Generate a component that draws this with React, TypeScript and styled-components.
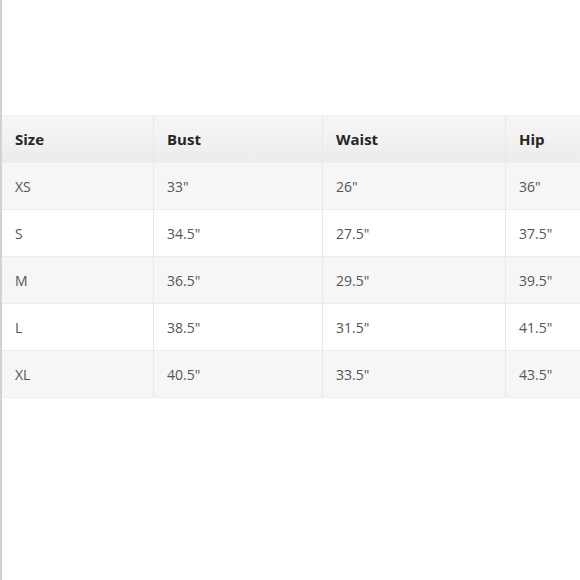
import React from 'react';
import styled, { createGlobalStyle } from 'styled-components';

const GlobalStyle = createGlobalStyle`
  body {
    margin: 0;
    background: #fff;
    font-family: "Open Sans", "Noto Sans", sans-serif;
  }
`;

const Page = styled.div`
  width: 580px;
  height: 580px;
  box-sizing: border-box;
  border-left: 2px solid #d2d2d2;
  padding-top: 115px;
  overflow: hidden;
`;

const Table = styled.div`
  width: 680px;
  margin-left: -2px;
  border-top: 1px solid #f0f0f0;
  border-bottom: 1px solid #ececec;
`;

const Row = styled.div<{ $shade: 'head' | 'gray' | 'white' }>`
  display: grid;
  grid-template-columns: 153px 169px 183px 1fr;
  height: 46px;
  background: ${(p) =>
    p.$shade === 'head'
      ? 'linear-gradient(#f7f7f7, #ececec)'
      : p.$shade === 'gray'
        ? '#f6f6f6'
        : '#ffffff'};
  & + & {
    border-top: 1px solid #ededed;
  }
`;

const Cell = styled.div<{ $head?: boolean }>`
  display: flex;
  align-items: center;
  padding-left: 15px;
  font-size: ${(p) => (p.$head ? '15px' : '14px')};
  font-weight: ${(p) => (p.$head ? 700 : 400)};
  color: ${(p) => (p.$head ? '#262626' : '#555')};
  & + & {
    border-left: ${(p) => (p.$head ? 'none' : '1px solid #e8e8e8')};
    padding-left: 13px;
  }
`;

const headers = ['Size', 'Bust', 'Waist', 'Hip'];
const rows = [
  ['XS', '33"', '26"', '36"'],
  ['S', '34.5"', '27.5"', '37.5"'],
  ['M', '36.5"', '29.5"', '39.5"'],
  ['L', '38.5"', '31.5"', '41.5"'],
  ['XL', '40.5"', '33.5"', '43.5"'],
];

export default function App() {
  return (
    <>
      <GlobalStyle />
      <Page>
        <Table>
          <Row $shade="head">
            {headers.map((h) => (
              <Cell key={h} $head>
                {h}
              </Cell>
            ))}
          </Row>
          {rows.map((r, i) => (
            <Row key={r[0]} $shade={i % 2 === 0 ? 'gray' : 'white'}>
              {r.map((c, j) => (
                <Cell key={j}>{c}</Cell>
              ))}
            </Row>
          ))}
        </Table>
      </Page>
    </>
  );
}
